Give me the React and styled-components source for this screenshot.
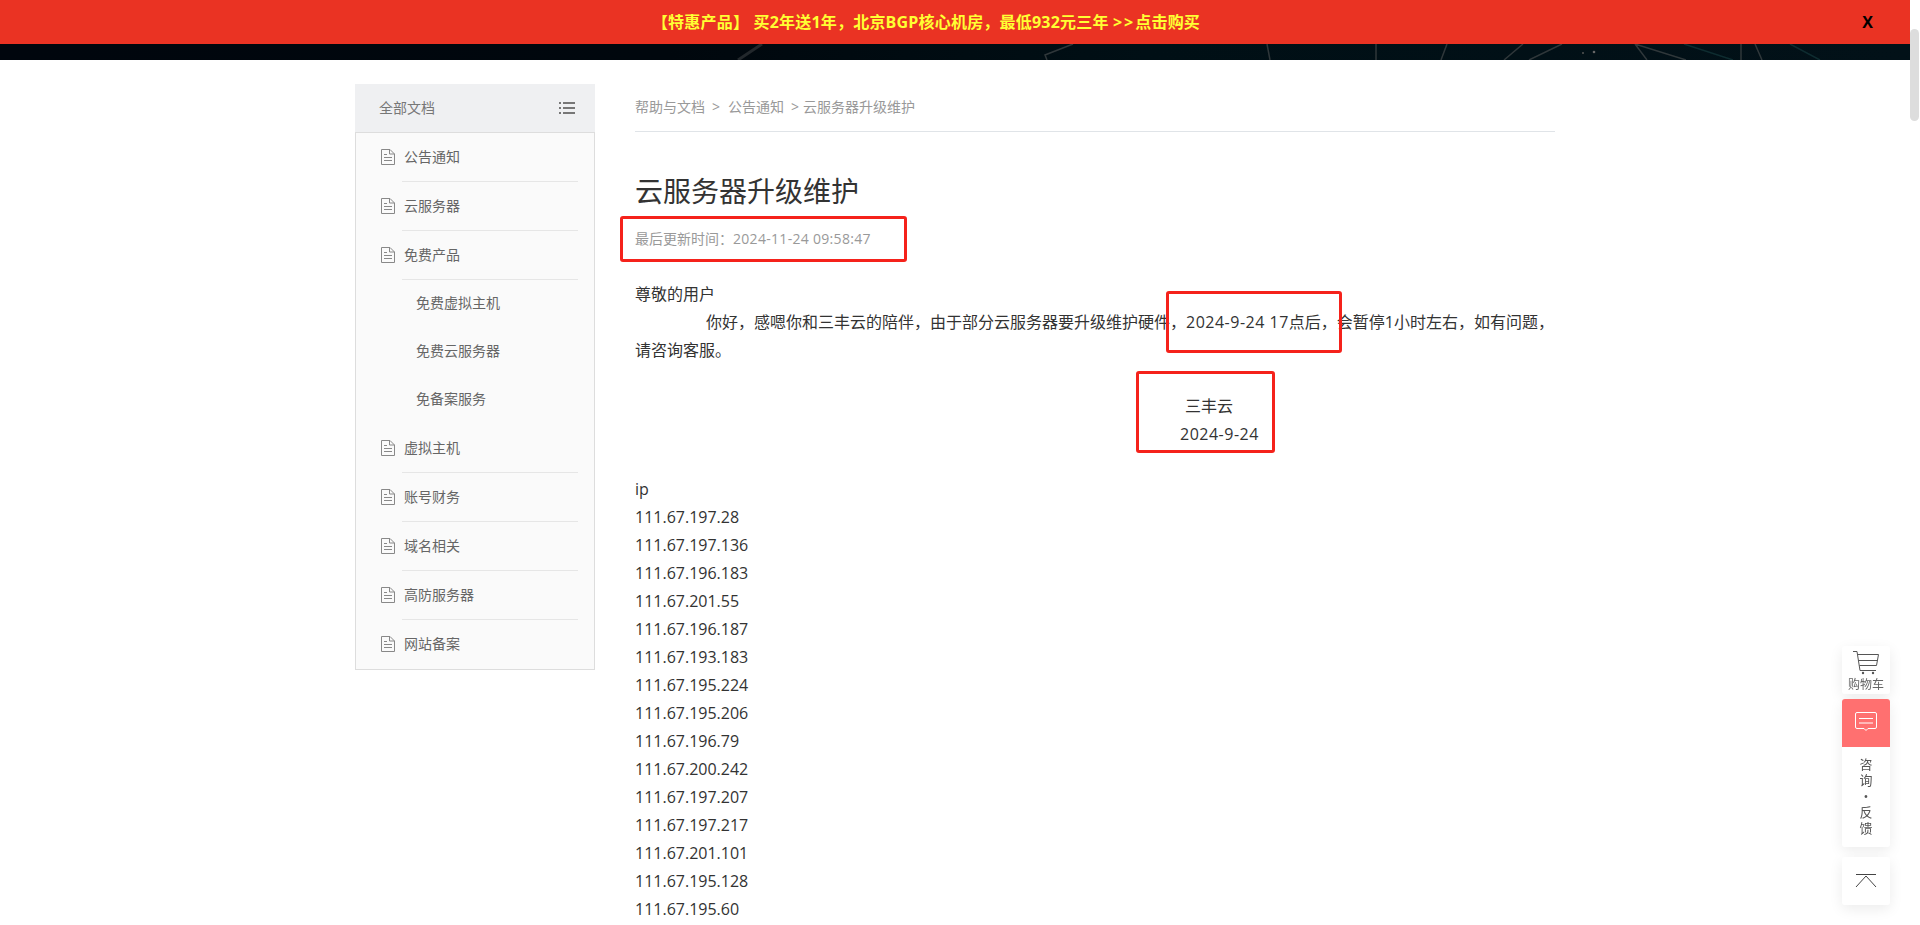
import React from 'react'
import styled, { createGlobalStyle } from 'styled-components'

const ipList = [
  '111.67.197.28', '111.67.197.136', '111.67.196.183', '111.67.201.55', '111.67.196.187',
  '111.67.193.183', '111.67.195.224', '111.67.195.206', '111.67.196.79', '111.67.200.242',
  '111.67.197.207', '111.67.197.217', '111.67.201.101', '111.67.195.128', '111.67.195.60',
]

const menu = [
  { label: '公告通知' },
  { label: '云服务器' },
  { label: '免费产品', children: ['免费虚拟主机', '免费云服务器', '免备案服务'] },
  { label: '虚拟主机' },
  { label: '账号财务' },
  { label: '域名相关' },
  { label: '高防服务器' },
  { label: '网站备案' },
]

const GlobalStyle = createGlobalStyle`
  html, body {
    margin: 0;
    height: 925px;
    overflow: hidden;
    background: #fff;
    font-family: "Open Sans", "Noto Sans CJK SC", sans-serif;
  }
  * { box-sizing: border-box; }
`

const Page = styled.div`
  width: 1910px;
  height: 925px;
  overflow: hidden;
`

const Banner = styled.div`
  height: 44px;
  background: #ea3323;
  display: flex;
  align-items: center;
  justify-content: center;
  position: relative;
  padding-right: 58px;
  font-size: 16px;
  line-height: 24px;
  font-weight: 700;
  letter-spacing: 0.2px;
  color: #ffff33;
  white-space: pre;
`

const Chevrons = styled.span`
  letter-spacing: 2px;
`

const CloseMark = styled.span`
  position: absolute;
  right: 37px;
  top: 10px;
  font-size: 16px;
  font-weight: 700;
  color: #000;
`

const Strip = styled.div`
  height: 16px;
  background: linear-gradient(90deg, #00060d 0%, #00070d 35%, #000f15 60%, #021118 100%);
  svg { display: block; }
`

const Scrollbar = styled.div`
  position: fixed;
  top: 29px;
  right: 1px;
  width: 9px;
  height: 92px;
  border-radius: 5px;
  background: #dddddd;
`

const Container = styled.div`
  width: 1200px;
  margin: 24px auto 0;
  display: flex;
  align-items: flex-start;
  gap: 40px;
`

const Sidebar = styled.aside`
  width: 240px;
  flex: none;
`

const SidebarHead = styled.div`
  height: 48px;
  background: #eff0f2;
  display: flex;
  align-items: center;
  justify-content: space-between;
  padding: 0 20px 0 24px;
  font-size: 14px;
  line-height: 20px;
  color: #777;

  span { margin-top: -1px; }
`

const SidebarBody = styled.ul`
  list-style: none;
  margin: 0;
  padding: 0;
  background: #fafafa;
  border: 1px solid #ddd;
`

const MenuRow = styled.li`
  height: 49px;
  display: flex;
  align-items: center;
  gap: 9px;
  padding: 0 0 1px 25px;
  font-size: 14px;
  line-height: 20px;
  color: #666;
  position: relative;

  span { margin-top: -1px; }

  &::after {
    content: '';
    position: absolute;
    left: 46px;
    bottom: 0;
    width: 176px;
    height: 1px;
    background: #e6e6e6;
    display: ${(p) => (p.$plain ? 'none' : 'block')};
  }
`

const SubRow = styled.li`
  height: 48px;
  display: flex;
  align-items: center;
  padding: 0 0 2px 60px;
  font-size: 14px;
  line-height: 20px;
  color: #666;
`

const Content = styled.main`
  width: 920px;
  flex: none;
  position: relative;
`

const Crumbs = styled.nav`
  height: 48px;
  display: flex;
  align-items: center;
  border-bottom: 1px solid #e0e4e8;
  padding-bottom: 1px;
  font-size: 14px;
  line-height: 20px;
  color: #999;
`

const CrumbArrow = styled.span`
  margin: 0 ${(p) => p.$gap}px 0 7px;
`

const Title = styled.h1`
  margin: 39px 0 0;
  font-size: 28px;
  line-height: 40px;
  font-weight: 400;
  color: #333;
`

const UpdatedAt = styled.div`
  margin-top: 18px;
  font-size: 14px;
  line-height: 20px;
  color: #999;
`

const Stamp = styled.span`
  letter-spacing: ${(p) => p.$spacing}px;
`

const Article = styled.article`
  margin-top: 31px;
  font-size: 16px;
  line-height: 28px;
  color: #333;
`

const Line = styled.div`
  padding-left: ${(p) => p.$indent || 0}px;
  margin-top: ${(p) => p.$top || 0}px;
`

const Paragraph = styled.p`
  margin: 0;
  text-indent: 71px;
`

const Callout = styled.div`
  position: absolute;
  border: 3px solid #f5221b;
  border-radius: 3px;
  left: ${(p) => p.$left}px;
  top: ${(p) => p.$top}px;
  width: ${(p) => p.$width}px;
  height: ${(p) => p.$height}px;
`

const FloatBar = styled.div`
  position: fixed;
  right: 30px;
  top: 646px;
  width: 48px;
  display: flex;
  flex-direction: column;
`

const FloatCard = styled.div`
  background: #fff;
  border-radius: 3px;
  box-shadow: 0 4px 14px rgba(0, 0, 0, 0.08);
  margin-top: ${(p) => p.$top || 0}px;
  overflow: hidden;
`

const CartButton = styled(FloatCard)`
  height: 48px;
  display: flex;
  flex-direction: column;
  align-items: center;
  padding-top: 4px;
  font-size: 12px;
  line-height: 14px;
  color: #666;

  svg { display: block; margin: 0 0 3px 0; }
`

const ChatIcon = styled.div`
  height: 48px;
  background: #ff7070;
  display: flex;
  justify-content: center;
  padding-top: 13px;
`

const ChatLabel = styled.div`
  height: 100px;
  padding-top: 9px;
  display: flex;
  flex-direction: column;
  align-items: center;
  font-size: 13px;
  line-height: 16px;
  color: #555;
`

const TopButton = styled(FloatCard)`
  height: 48px;
  display: flex;
  align-items: center;
  justify-content: center;
`

const DocIcon = () => (
  <svg width="14" height="16" viewBox="0 0 14 16" fill="none" stroke="#888" strokeWidth="1">
    <path d="M.5.5h8.500l4.500 4.500v10.500h-13z" />
    <path d="M8.500.5v4.500h5M3 5.500h3M3 8.500h8M3 11.500h8" />
  </svg>
)

const ListIcon = () => (
  <svg width="16" height="12" viewBox="0 0 16 12" fill="#777">
    <rect x="0" y="0" width="2" height="2" />
    <rect x="0" y="5" width="2" height="2" />
    <rect x="0" y="10" width="2" height="2" />
    <rect x="4" y="0" width="12" height="2" />
    <rect x="4" y="5" width="12" height="2" />
    <rect x="4" y="10" width="12" height="2" />
  </svg>
)

const StripArt = () => (
  <svg width="1910" height="16" viewBox="0 44 1910 16" fill="none" stroke="#2f373a" strokeWidth="1.500">
    <path d="M738 60 762 44" stroke="#22282c" strokeWidth="3" />
    <path d="M1047 60 1045 55 1073 44M1267 44 1270 60M1376 44V60M1447 44 1441 60M1523 44 1504 60M1562 44 1529 60M1635 44 1647 60M1635 44 1686 60M1741 44V60M1755 44 1762 60" />
    <path d="M1684 44 1733 60M1790 44 1820 60" stroke="#0e2c30" />
    <circle cx="1583" cy="53" r="1" fill="#555" stroke="none" />
    <circle cx="1594" cy="52" r="1.300" fill="#666" stroke="none" />
  </svg>
)

const CartIcon = () => (
  <svg width="26" height="25" viewBox="0 0 26 25" fill="none" stroke="#555" strokeWidth="1">
    <path d="M0 1.500h4l3 19h16" />
    <path d="M4.500 4.500h21l-2 11h-17M5.500 10.500h19" />
    <circle cx="10" cy="23" r="1.200" fill="#555" stroke="none" />
    <circle cx="20" cy="23" r="1.200" fill="#555" stroke="none" />
  </svg>
)

const ChatGlyph = () => (
  <svg width="22" height="20" viewBox="0 0 22 20" fill="none" stroke="#fff" strokeWidth="1">
    <path d="M2 .5h18a1.500 1.500 0 0 1 1.500 1.500v13a1.500 1.500 0 0 1-1.500 1.500h-7l-2 2-2-2h-7a1.500 1.500 0 0 1-1.500-1.500v-13a1.500 1.500 0 0 1 1.500-1.500z" />
    <path d="M4 6.500h14M4 11h14" />
  </svg>
)

const UpArrow = () => (
  <svg width="22" height="14" viewBox="0 0 22 14" fill="none" stroke="#444" strokeWidth="1">
    <path d="M1 .5h20M1 13 11 2l10 11" />
  </svg>
)

function App() {
  return (
    <Page>
      <GlobalStyle />
      <Banner>
        <span>【特惠产品】 买2年送1年，北京BGP核心机房，最低932元三年 <Chevrons>&gt;&gt;</Chevrons>点击购买</span>
        <CloseMark>X</CloseMark>
      </Banner>
      <Strip><StripArt /></Strip>
      <Scrollbar />

      <Container>
        <Sidebar>
          <SidebarHead>
            <span>全部文档</span>
            <ListIcon />
          </SidebarHead>
          <SidebarBody>
            {menu.map((item, i) => (
              <React.Fragment key={item.label}>
                <MenuRow $plain={i === menu.length - 1}>
                  <DocIcon />
                  <span>{item.label}</span>
                </MenuRow>
                {item.children && item.children.map((child) => <SubRow key={child}>{child}</SubRow>)}
              </React.Fragment>
            ))}
          </SidebarBody>
        </Sidebar>

        <Content>
          <Crumbs>
            帮助与文档<CrumbArrow $gap={8}>&gt;</CrumbArrow>公告通知<CrumbArrow $gap={4}>&gt;</CrumbArrow>云服务器升级维护
          </Crumbs>
          <Title>云服务器升级维护</Title>
          <UpdatedAt>最后更新时间：<Stamp $spacing={0.3}>2024-11-24 09:58:47</Stamp></UpdatedAt>
          <Article>
            <div>尊敬的用户</div>
            <Paragraph>你好，感嗯你和三丰云的陪伴，由于部分云服务器要升级维护硬件，<Stamp $spacing={0.5}>2024-9-24 17</Stamp>点后，会暂停1小时左右，如有问题，请咨询客服。</Paragraph>
            <Line $indent={550} $top={28}>三丰云</Line>
            <Line $indent={545}><Stamp $spacing={0.5}>2024-9-24</Stamp></Line>
            <Line $top={27}>ip</Line>
            {ipList.map((ip) => <Line key={ip}>{ip}</Line>)}
          </Article>

          <Callout $left={-15} $top={132} $width={287} $height={46} />
          <Callout $left={531} $top={207} $width={176} $height={62} />
          <Callout $left={501} $top={287} $width={139} $height={82} />
        </Content>
      </Container>

      <FloatBar>
        <CartButton>
          <CartIcon />
          购物车
        </CartButton>
        <FloatCard $top={5}>
          <ChatIcon><ChatGlyph /></ChatIcon>
          <ChatLabel>
            <span>咨</span>
            <span>询</span>
            <span>•</span>
            <span>反</span>
            <span>馈</span>
          </ChatLabel>
        </FloatCard>
        <TopButton $top={10}><UpArrow /></TopButton>
      </FloatBar>
    </Page>
  )
}

export default App
